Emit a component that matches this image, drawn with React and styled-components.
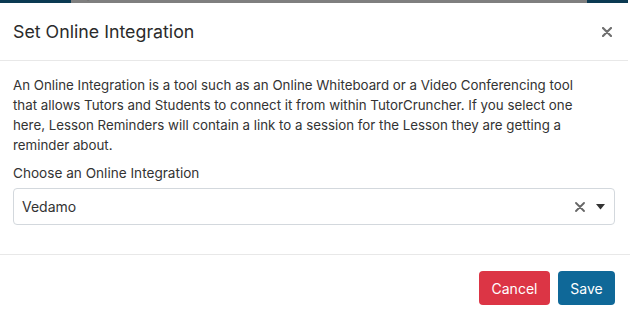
import styled, { createGlobalStyle } from 'styled-components';

const Global = createGlobalStyle`
  html, body {
    margin: 0;
    padding: 0;
    background: #ffffff;
    font-family: Inter, "Noto Sans", sans-serif;
    color: #333333;
  }
`;

const Page = styled.div`
  width: 630px;
  height: 321px;
  overflow: hidden;
  display: flex;
  flex-direction: column;
`;

// the nav bar behind the backdrop, only its bottom edge shows
const Strip = styled.div`
  height: 3px;
  display: flex;
  overflow: hidden;
  flex-shrink: 0;
`;

const StripPart = styled.div`
  background: ${(p) => p.$bg};
  width: ${(p) => p.$w || 'auto'};
  flex: ${(p) => (p.$grow ? 1 : 'none')};
  overflow: hidden;
`;

const StripText = styled.span`
  display: block;
  margin-top: -12px;
  margin-left: 13px;
  font-size: 14px;
  line-height: 14px;
  color: #4a4a4a;
`;

const Modal = styled.div`
  width: 628px;
  background: #ffffff;
  flex: 1;
  display: flex;
  flex-direction: column;
`;

const Header = styled.div`
  display: flex;
  align-items: center;
  justify-content: space-between;
  height: 57px;
  padding: 0 16px 0 13px;
  border-bottom: 1px solid #e8e8e8;
`;

const Title = styled.h2`
  margin: 0;
  font-size: 17.8px;
  font-weight: 400;
  color: #2b2b2b;
`;

const Close = styled.button`
  border: none;
  background: none;
  padding: 0;
  width: 10px;
  height: 10px;
  display: flex;
  cursor: pointer;
`;

const Body = styled.div`
  padding: 14px 13px 29px 13px;
  display: flex;
  flex-direction: column;
`;

const Text = styled.p`
  margin: 0;
  max-width: 586px;
  font-size: 13.3px;
  line-height: 20px;
  color: #333333;
`;

const Label = styled.label`
  margin-top: 8px;
  font-size: 13.6px;
  line-height: 20px;
  color: #333333;
`;

const Select = styled.div`
  margin-top: 5px;
  width: 602px;
  box-sizing: border-box;
  height: 37px;
  border: 1px solid #d3d8dd;
  border-radius: 4px;
  display: flex;
  align-items: center;
  padding: 0 9px 0 8px;
  font-size: 14px;
  color: #333333;
`;

const Value = styled.span`
  flex: 1;
`;

const Icons = styled.div`
  display: flex;
  align-items: center;
  gap: 11px;
`;

const Footer = styled.div`
  border-top: 1px solid #e8e8e8;
  display: flex;
  justify-content: flex-end;
  gap: 8px;
  padding: 16px 15px 0 0;
  width: 615px;
`;

const Button = styled.button`
  height: 34px;
  width: ${(p) => p.$w};
  padding: 0;
  border: none;
  border-radius: 4px;
  background: ${(p) => p.$bg};
  color: #ffffff;
  font-family: Inter, "Noto Sans", sans-serif;
  font-size: 14px;
  cursor: pointer;
`;

const Cross = ({ size, color, width }) => (
  <svg width={size} height={size} viewBox="0 0 10 10">
    <path d="M1 1L9 9M9 1L1 9" stroke={color} strokeWidth={width} strokeLinecap="round" />
  </svg>
);

const App = () => {
  return (
    <Page>
      <Global />
      <Strip>
        <StripPart $bg="#0b3a52" $w="71px" />
        <StripPart $bg="#7f7f7f" $grow>
          <StripText>Search</StripText>
        </StripPart>
        <StripPart $bg="#0b3a52" $w="41px" />
        <StripPart $bg="#ffffff" $w="2px" />
      </Strip>
      <Modal>
        <Header>
          <Title>Set Online Integration</Title>
          <Close>
            <Cross size={10} color="#6f6f6f" width={2.2} />
          </Close>
        </Header>
        <Body>
          <Text>
            An Online Integration is a tool such as an Online Whiteboard or a Video Conferencing tool
            that allows Tutors and Students to connect it from within TutorCruncher. If you select one
            here, Lesson Reminders will contain a link to a session for the Lesson they are getting a
            reminder about.
          </Text>
          <Label>Choose an Online Integration</Label>
          <Select>
            <Value>Vedamo</Value>
            <Icons>
              <Cross size={10} color="#666666" width={1.8} />
              <svg width="9" height="6" viewBox="0 0 9 6">
                <path d="M0 0H9L4.5 5.5Z" fill="#333333" />
              </svg>
            </Icons>
          </Select>
        </Body>
        <Footer>
          <Button $bg="#dc3545" $w="71px">Cancel</Button>
          <Button $bg="#0f6898" $w="57px">Save</Button>
        </Footer>
      </Modal>
    </Page>
  );
};

export default App;
